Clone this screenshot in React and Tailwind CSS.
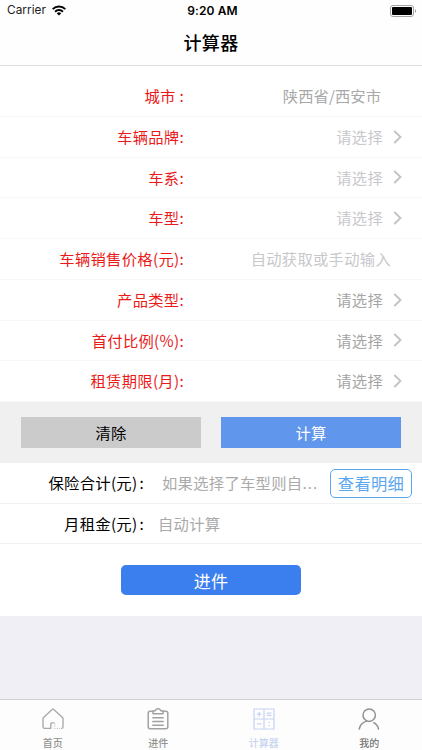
import React from 'react';

const rows = [
  { label: '城市 :', value: '陕西省/西安市', color: 'text-[#a8a8a8] tracking-[0.050px]', pad: 'pr-[41px]' },
  { label: '车辆品牌:', value: '请选择', color: 'text-[#c8c8cc]', arrow: true },
  { label: '车系:', value: '请选择', color: 'text-[#c8c8cc]', arrow: true },
  { label: '车型:', value: '请选择', color: 'text-[#c8c8cc]', arrow: true },
  { label: '车辆销售价格(元):', value: '自动获取或手动输入', color: 'text-[#c8c8cc]', pad: 'pr-[31px]' },
  { label: '产品类型:', value: '请选择', color: 'text-[#a5a5a5]', arrow: true },
  { label: '首付比例(%):', value: '请选择', color: 'text-[#a5a5a5]', arrow: true },
  { label: '租赁期限(月):', value: '请选择', color: 'text-[#a5a5a5]', arrow: true },
];

const StatusBar = () => (
  <div className="flex h-[22px] items-center px-[7px] font-['Inter','Liberation_Sans',sans-serif] text-[12px] leading-none">
    <div className="flex flex-1 items-center gap-[6px]">
      <span className="text-[11.800px] tracking-[0.050px] text-[#222]">Carrier</span>
      <svg width="14" height="11" viewBox="0 0 14 11" fill="none" stroke="#000" strokeWidth="2">
        <path d="M0.7 4.1a8.9 8.9 0 0 1 12.6 0" />
        <path d="M3.1 6.7a5.5 5.5 0 0 1 7.8 0" />
        <path d="M4.8 8.4a3.1 3.1 0 0 1 4.4 0L7 10.6z" fill="#000" stroke="none" />
      </svg>
    </div>
    <span className="ml-[3px] font-semibold tracking-[0.100px]">9:20 AM</span>
    <div className="flex flex-1 justify-end">
      <svg className="-mr-[2px]" width="27" height="12" viewBox="0 0 27 12">
        <rect x="0.5" y="0.5" width="23" height="11" rx="2.5" fill="none" stroke="#a3a3a3" />
        <rect x="2" y="2" width="20" height="8" rx="1" fill="#000" />
        <path d="M25 4v4c1.6-.5 1.6-3.500 0-4z" fill="#a3a3a3" />
      </svg>
    </div>
  </div>
);

const Chevron = () => (
  <svg width="10" height="14" viewBox="0 0 10 14" fill="none" stroke="#c2c2c6" strokeWidth="1.8">
    <path d="M1.300 1L7.500 7l-6.200 6" />
  </svg>
);

const FormRow = ({ label, value, color, arrow, pad }) => (
  <div className="flex h-[40.750px] items-center border-b border-[#f8f8f8]">
    <span className="w-[184px] text-right text-[#ea1a1a]">{label}</span>
    <div className={`flex flex-1 items-center justify-end ${arrow ? 'gap-[10px] pr-[19px]' : pad}`}>
      <span className={color}>{value}</span>
      {arrow && <Chevron />}
    </div>
  </div>
);

const HomeIcon = () => (
  <svg width="22" height="22" viewBox="0 0 22 22" fill="none" stroke="#aaa" strokeWidth="1.400" strokeLinecap="round" strokeLinejoin="round">
    <path d="M8.800 20.400H2.600a1.600 1.600 0 0 1-1.600-1.600V10L10.200 1.500q.8-.8 1.600 0L21 10v8.800q0 1.600-1.200 1.600M8.800 20.400v-4.600q0-.9.900-.9h2.200" />
    <path strokeWidth="1" d="M12.800 16v.1M12.800 18.200v.1M12.800 20.400h.1M15.200 20.400h.1M17.600 20.400h.1" />
  </svg>
);

const ClipboardIcon = () => (
  <svg width="22" height="22" viewBox="0 0 22 22" fill="none" stroke="#a2a2a2" strokeWidth="1.500" strokeLinecap="round" strokeLinejoin="round">
    <path d="M6 3.200H3.200Q1.200 3.200 1.200 5.200v13.600q0 2 2 2h15.600q2 0 2-2V5.200q0-2-2-2H16" />
    <path d="M6 5.700V3.400q0-.7.800-.7h1.500Q9 .8 11 .8t2.700 1.900h1.500q.8 0 .8.700v2.300z" />
    <path d="M5.800 9.800h10.400M5.800 13.600h10.400M5.800 17.300h10.400" />
  </svg>
);

const CalculatorIcon = () => (
  <svg width="22" height="22" viewBox="0 0 22 22" fill="none" stroke="#c6d3f1" strokeWidth="1.200">
    <path d="M1 1h20v20H1zM11 1v20M1 11h20" />
    <path d="M4 6.200h4.400M6.200 4v4.400M13.800 5.200h4.600M13.800 7.400h4.600M4 15.800h4.400M16 13.700v1.300M16 16.700V18" />
  </svg>
);

const UserIcon = () => (
  <svg width="22" height="22" viewBox="0 0 22 22" fill="none" stroke="#929292" strokeWidth="1.500" strokeLinecap="round">
    <circle cx="11.200" cy="7.200" r="6.200" />
    <path d="M8.800 13.100Q2.300 14.900 1.200 21M15.800 14.700q4 2.300 4.700 6.300" />
  </svg>
);

const tabs = [
  { name: '首页', icon: HomeIcon, color: 'text-[#929292]' },
  { name: '进件', icon: ClipboardIcon, color: 'text-[#929292]' },
  { name: '计算器', icon: CalculatorIcon, color: 'text-[#c6d3f1]' },
  { name: '我的', icon: UserIcon, color: 'text-[#777]' },
];

const App = () => {
  return (
    <div className="flex h-[750px] w-[422px] flex-col overflow-hidden bg-[#efeff5] font-['Noto_Sans_CJK_SC',sans-serif] text-[15.300px] leading-none tracking-[0.300px] text-black">
      <header className="h-[66px] border-b border-[#dedede] bg-[#fefefe]">
        <StatusBar />
        <h1 className="flex h-[39px] items-center justify-center text-[18px] font-medium">计算器</h1>
      </header>

      <main className="bg-white">
        <div className="h-[336px] pt-[10px]">
          {rows.map((row) => (
            <FormRow key={row.label} {...row} />
          ))}
        </div>

        <div className="flex h-[61px] items-center gap-5 bg-[#f0f0f0] px-[21px]">
          <button className="h-[31px] flex-1 bg-[#cbcbcb]">清除</button>
          <button className="h-[31px] flex-1 bg-[#6096ec] text-white">计算</button>
        </div>

        <div className="flex h-[41px] items-center border-b border-[#f1f1f1]">
          <div className="w-[144px] text-right">
            保险合计(元)<span className="ml-[2px]">:</span>
          </div>
          <div className="ml-[18px] w-[158px] whitespace-nowrap text-[#aaa]">
            如果选择了车型则自<span className="tracking-[1px]">...</span>
          </div>
          <button className="ml-[10px] h-[29px] w-[82px] rounded-[5px] border border-[#5ba7ee] text-[16.300px] text-[#5ba7ee]">查看明细</button>
        </div>
        <div className="flex h-[40px] items-center border-b border-[#f1f1f1]">
          <div className="w-[144px] text-right">
            月租金(元)<span className="ml-[2px]">:</span>
          </div>
          <div className="ml-[14px] text-[#aaa]">自动计算</div>
        </div>

        <div className="flex h-[72px] justify-center pt-[21px]">
          <button className="h-[30px] w-[180px] rounded-[5px] bg-[#3b7eed] text-[17px] text-white">进件</button>
        </div>
      </main>

      <nav className="mt-auto flex h-[51px] border-t border-[#d2d2d6] bg-[#fdfdfd]">
        {tabs.map(({ name, icon: Icon, color }) => (
          <div key={name} className="flex flex-1 flex-col items-center pt-[8px]">
            <Icon />
            <span className={`mt-[8px] text-[10px] font-medium tracking-normal ${color}`}>{name}</span>
          </div>
        ))}
      </nav>
    </div>
  );
};

export default App;
